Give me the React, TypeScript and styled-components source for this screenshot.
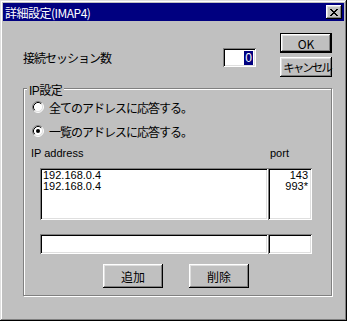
import styled, { createGlobalStyle } from "styled-components";

const GlobalStyle = createGlobalStyle`
  html, body {
    margin: 0;
    padding: 0;
    background: #c0c0c0;
  }
  body {
    font-family: "Liberation Sans", "Noto Sans CJK JP", sans-serif;
    font-size: 11px;
    color: #000;
  }
`;

const raised = `
  box-shadow: inset -1px -1px #000, inset 1px 1px #fff,
    inset -2px -2px #808080, inset 2px 2px #dfdfdf;
`;

const sunken = `
  box-shadow: inset 1px 1px #808080, inset -1px -1px #fff,
    inset 2px 2px #000, inset -2px -2px #dfdfdf;
`;

const Window = styled.div`
  width: 347px;
  height: 321px;
  box-sizing: border-box;
  padding: 3px;
  display: flex;
  flex-direction: column;
  background: #c0c0c0;
  box-shadow: inset -1px -1px #000, inset 1px 1px #dfdfdf,
    inset -2px -2px #808080, inset 2px 2px #fff;
`;

const TitleBar = styled.div`
  height: 18px;
  background: #000080;
  display: flex;
  align-items: center;
  justify-content: space-between;
  padding: 0 2px;
`;

const Title = styled.span`
  color: #fff;
  font-family: "Noto Sans CJK JP", sans-serif;
  font-size: 12px;
  letter-spacing: -0.5px;
`;

const CloseButton = styled.div`
  width: 16px;
  height: 14px;
  background: #c0c0c0;
  display: flex;
  align-items: center;
  justify-content: center;
  ${raised}
`;

const Body = styled.div`
  flex: 1;
  padding: 12px 12px 0 20px;
`;

const TopRow = styled.div`
  display: flex;
  align-items: flex-start;
`;

const SessionField = styled.div`
  width: 233px;
  height: 19px;
  margin-top: 15px;
  display: flex;
  align-items: center;
  justify-content: space-between;
`;

const JpText = styled.span`
  font-family: "Noto Sans CJK JP", sans-serif;
  font-size: 12px;
  letter-spacing: -1px;
  white-space: nowrap;
`;

const NumberBox = styled.div`
  width: 33px;
  height: 19px;
  box-sizing: border-box;
  background: #fff;
  display: flex;
  align-items: center;
  justify-content: flex-end;
  padding: 0 3px 0 2px;
  ${sunken}
`;

const Selected = styled.span`
  background: #000080;
  color: #fff;
  font-size: 12px;
  line-height: 14px;
  padding: 0 1px;
`;

const ButtonColumn = styled.div`
  margin-left: 24px;
  display: flex;
  flex-direction: column;
  gap: 4px;
`;

const PushButton = styled.div<{ $w: number; $h: number; $default?: boolean }>`
  width: ${(p) => p.$w}px;
  height: ${(p) => p.$h}px;
  box-sizing: border-box;
  background: #c0c0c0;
  display: flex;
  align-items: center;
  justify-content: center;
  font-family: "Noto Sans CJK JP", sans-serif;
  font-size: 12px;
  white-space: nowrap;
  border: ${(p) => (p.$default ? "1px solid #000" : "none")};
  ${raised}
`;

const Squeezed = styled.span`
  letter-spacing: -2px;
  font-size: 11.5px;
  margin-right: -2px;
`;

const GroupBox = styled.div`
  position: relative;
  margin-top: 11px;
  border: 1px solid #808080;
  box-shadow: inset 1px 1px #fff, 1px 1px #fff;
  padding: 10px 19px 7px 7px;
`;

const Legend = styled.span`
  position: absolute;
  top: -8px;
  left: 3px;
  padding: 0 2px;
  background: #c0c0c0;
  font-family: "Liberation Sans", "Noto Sans CJK JP", sans-serif;
  font-size: 12px;
  letter-spacing: -0.5px;
`;

const RadioList = styled.div`
  display: flex;
  flex-direction: column;
  gap: 8px;
  padding-left: 1px;
`;

const RadioRow = styled.div`
  height: 16px;
  display: flex;
  align-items: center;
  gap: 5px;
`;

const ColumnLabels = styled.div`
  margin-top: 7px;
  display: grid;
  grid-template-columns: 239px auto;
  font-size: 11px;
  line-height: 14px;
`;

const Columns = styled.div<{ $h: number; $top: number }>`
  margin: ${(p) => p.$top}px 0 0 9px;
  width: 272px;
  height: ${(p) => p.$h}px;
  display: grid;
  grid-template-columns: 228px 44px;
`;

const Field = styled.div<{ $right?: boolean }>`
  background: #fff;
  box-sizing: border-box;
  padding: 2px ${(p) => (p.$right ? "4px" : "3px")};
  text-align: ${(p) => (p.$right ? "right" : "left")};
  font-size: 11px;
  line-height: 11px;
  ${sunken}
`;

const ButtonRow = styled.div`
  margin: 10px 0 0 9px;
  width: 272px;
  display: flex;
  justify-content: center;
  gap: 26px;
`;

function Radio({ checked }: { checked?: boolean }) {
  return (
    <svg width="12" height="12" viewBox="0 0 12 12">
      <circle cx="6" cy="6" r="5" fill="#fff" />
      <path d="M2.11 9.89 A5.5 5.5 0 0 1 9.89 2.11" fill="none" stroke="#808080" />
      <path d="M9.89 2.11 A5.5 5.5 0 0 1 2.11 9.89" fill="none" stroke="#fff" />
      <path d="M2.82 9.18 A4.5 4.5 0 0 1 9.18 2.82" fill="none" stroke="#000" />
      <path d="M9.18 2.82 A4.5 4.5 0 0 1 2.82 9.18" fill="none" stroke="#dfdfdf" />
      {checked && <circle cx="6" cy="6" r="2" fill="#000" />}
    </svg>
  );
}

const entries = [
  { ip: "192.168.0.4", port: "143" },
  { ip: "192.168.0.4", port: "993*" },
];

export default function App() {
  return (
    <>
      <GlobalStyle />
      <Window>
        <TitleBar>
          <Title>詳細設定(IMAP4)</Title>
          <CloseButton>
            <svg width="8" height="7" viewBox="0 0 8 7">
              <path
                d="M0 0h2v1h1v1h2V1h1V0h2v1H7v1H6v1H5v1h1v1h1v1h1v1H6V6H5V5H3v1H2v1H0V6h1V5h1V4h1V3H2V2H1V1H0z"
                fill="#000"
              />
            </svg>
          </CloseButton>
        </TitleBar>
        <Body>
          <TopRow>
            <SessionField>
              <JpText>接続セッション数</JpText>
              <NumberBox>
                <Selected>0</Selected>
              </NumberBox>
            </SessionField>
            <ButtonColumn>
              <PushButton $w={52} $h={20} $default>
                OK
              </PushButton>
              <PushButton $w={52} $h={20}>
                <Squeezed>キャンセル</Squeezed>
              </PushButton>
            </ButtonColumn>
          </TopRow>
          <GroupBox>
            <Legend>IP設定</Legend>
            <RadioList>
              <RadioRow>
                <Radio />
                <JpText>全てのアドレスに応答する。</JpText>
              </RadioRow>
              <RadioRow>
                <Radio checked />
                <JpText>一覧のアドレスに応答する。</JpText>
              </RadioRow>
            </RadioList>
            <ColumnLabels>
              <span>IP address</span>
              <span>port</span>
            </ColumnLabels>
            <Columns $h={52} $top={8}>
              <Field>
                {entries.map((e, i) => (
                  <div key={i}>{e.ip}</div>
                ))}
              </Field>
              <Field $right>
                {entries.map((e, i) => (
                  <div key={i}>{e.port}</div>
                ))}
              </Field>
            </Columns>
            <Columns $h={20} $top={14}>
              <Field />
              <Field $right />
            </Columns>
            <ButtonRow>
              <PushButton $w={60} $h={24}>
                追加
              </PushButton>
              <PushButton $w={60} $h={24}>
                削除
              </PushButton>
            </ButtonRow>
          </GroupBox>
        </Body>
      </Window>
    </>
  );
}
